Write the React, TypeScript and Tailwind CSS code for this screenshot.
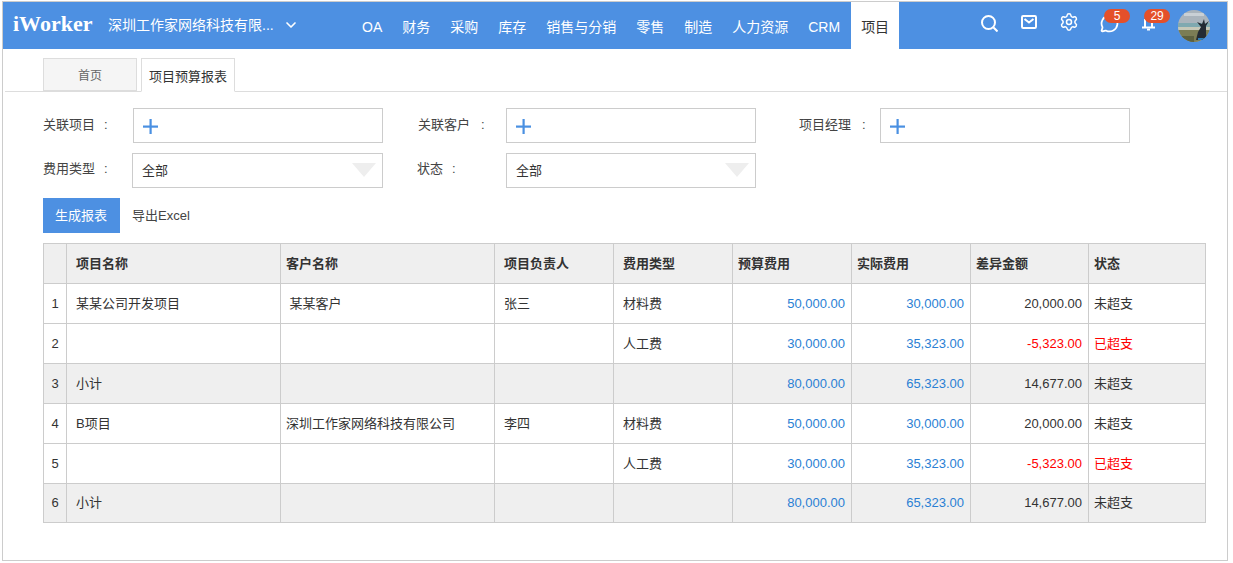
import { ChevronDown, MessageCircle, Settings } from "lucide-react"
import type { ReactNode } from "react"

const navItems = ["OA", "财务", "采购", "库存", "销售与分销", "零售", "制造", "人力资源", "CRM"]

type Row = {
    name: string
    customer: string
    owner: string
    type: string
    budget: string
    actual: string
    diff: string
    status: string
    subtotal?: boolean
    over?: boolean
}

const rows: Row[] = [
    { name: "某某公司开发项目", customer: " 某某客户", owner: "张三", type: "材料费", budget: "50,000.00", actual: "30,000.00", diff: "20,000.00", status: "未超支" },
    { name: "", customer: "", owner: "", type: "人工费", budget: "30,000.00", actual: "35,323.00", diff: "-5,323.00", status: "已超支", over: true },
    { name: "小计", customer: "", owner: "", type: "", budget: "80,000.00", actual: "65,323.00", diff: "14,677.00", status: "未超支", subtotal: true },
    { name: "B项目", customer: "深圳工作家网络科技有限公司", owner: "李四", type: "材料费", budget: "50,000.00", actual: "30,000.00", diff: "20,000.00", status: "未超支" },
    { name: "", customer: "", owner: "", type: "人工费", budget: "30,000.00", actual: "35,323.00", diff: "-5,323.00", status: "已超支", over: true },
    { name: "小计", customer: "", owner: "", type: "", budget: "80,000.00", actual: "65,323.00", diff: "14,677.00", status: "未超支", subtotal: true },
]

const headers = [
    { label: "", cls: "w-[23px]" },
    { label: "项目名称", cls: "w-[214px] px-[9px]" },
    { label: "客户名称", cls: "w-[214px] px-[5px]" },
    { label: "项目负责人", cls: "w-[119px] px-[9px]" },
    { label: "费用类型", cls: "w-[119px] px-[9px]" },
    { label: "预算费用", cls: "w-[119px] px-[5px]" },
    { label: "实际费用", cls: "w-[119px] px-[5px]" },
    { label: "差异金额", cls: "w-[118px] px-[5px]" },
    { label: "状态", cls: "w-[117px] px-[5px]" },
]

function PickerField({ label, labelWidth, colonGap }: { label: string; labelWidth: string; colonGap: string }) {
    return (
        <div className="flex items-center">
            <span className={`${labelWidth} text-[13px] text-[#444] -mt-[1px]`}>
                {label}
                <span className={colonGap}>:</span>
            </span>
            <div className="w-[250px] h-[35px] border border-[#ccc] flex items-center pl-[9px]">
                <svg width="15" height="15" viewBox="0 0 15 15" className="mt-[2px] text-[#4a90e2]" fill="currentColor">
                    <rect x="6.5" width="2.2" height="15" />
                    <rect y="6.5" width="15" height="2.2" />
                </svg>
            </div>
        </div>
    )
}

function SelectField({ label, labelWidth, width }: { label: string; labelWidth: string; width: string }) {
    return (
        <div className="flex items-center">
            <span className={`${labelWidth} text-[13px] text-[#444] -mt-[3px]`}>
                {label}
                <span className="ml-[9px]">:</span>
            </span>
            <div className={`${width} h-[35px] border border-[#ccc] flex items-center justify-between pl-[9px] pr-[6px]`}>
                <span className="text-[13px] text-[#333] mt-[1px]">全部</span>
                <span className="w-0 h-0 border-x-[12px] border-x-transparent border-t-[14px] border-t-[#eeeeee] -mt-[1px]"></span>
            </div>
        </div>
    )
}

function HeaderIcon({ children, badge }: { children: ReactNode; badge?: number }) {
    return (
        <div className="relative w-[40px] flex justify-center pt-[10px]">
            {children}
            {badge !== undefined && (
                <span className="absolute top-[7px] left-[15px] w-[26px] h-[14px] rounded-full bg-[#e4502a] text-white text-[12px] leading-[14px] text-center">
                    {badge}
                </span>
            )}
        </div>
    )
}

function Avatar() {
    return (
        <svg width="32" height="32" viewBox="0 0 32 32" className="rounded-full">
            <rect width="32" height="32" fill="#aab4bc" />
            <rect x="6" y="3" width="20" height="3" fill="#c9d0d5" />
            <rect y="13" width="32" height="4" fill="#7fa9b0" />
            <rect y="17" width="32" height="3" fill="#c5c8b8" />
            <rect y="20" width="32" height="12" fill="#7b7d55" />
            <rect y="26" width="16" height="6" fill="#5c6140" />
            <path d="M19 12 L24 14 L26 9 L27 14 L31 11 L28 16 L28 24 L29 30 L18 30 L20 22 L23 17 Z" fill="#242b33" />
            <rect x="20" y="28" width="7" height="2" fill="#2d7fb8" />
        </svg>
    )
}

export default function App() {
    return (
        <div className="font-['Liberation_Sans','Noto_Sans_CJK_SC',sans-serif] pl-[2px] pt-[1px] w-[1233px] h-[563px] overflow-hidden bg-white">
            <div className="w-[1226px] h-[560px] border border-[#ccc]">
                <header className="h-[47px] bg-[#4d90e2] flex text-white">
                    <span className="ml-[10px] font-['Liberation_Serif',serif] font-bold text-[22px] leading-[44px] w-[95px]">iWorker</span>
                    <span className="text-[14px] leading-[46px] w-[175px]">深圳工作家网络科技有限...</span>
                    <ChevronDown className="mt-[15px]" size={16} strokeWidth={2.5} />
                    <nav className="ml-[53px] flex text-[14px]">
                        {navItems.map((item) => (
                            <span key={item} className="px-[10px] leading-[50px] whitespace-nowrap">{item}</span>
                        ))}
                        <span className="ml-[1px] w-[48px] bg-white text-[#333] text-center leading-[50px]">项目</span>
                    </nav>
                    <div className="ml-[70px] flex">
                        <HeaderIcon>
                            <svg width="17" height="17" viewBox="0 0 17 17" fill="none" stroke="currentColor" strokeWidth="2" className="mt-[3px]">
                                <circle cx="7.5" cy="7.5" r="6.5" />
                                <path d="M12.5 12.5L16.5 16.5" />
                            </svg>
                        </HeaderIcon>
                        <HeaderIcon>
                            <svg width="16" height="14" viewBox="0 0 16 14" fill="none" stroke="currentColor" strokeWidth="2" className="mt-[3px]">
                                <rect x="1" y="1" width="14" height="12" rx="1.2" />
                                <path d="M3.5 4l4.5 3.5L12.5 4" />
                            </svg>
                        </HeaderIcon>
                        <HeaderIcon>
                            <Settings size={20} strokeWidth={1.8} />
                        </HeaderIcon>
                        <HeaderIcon badge={5}>
                            <MessageCircle size={19} strokeWidth={2.2} className="mt-[2px]" />
                        </HeaderIcon>
                        <HeaderIcon badge={29}>
                            <svg width="16" height="18" viewBox="0 0 16 18" fill="none" stroke="currentColor" strokeWidth="2" className="mt-[2px]">
                                <path d="M1 13.5h13M4 13V5M11 13V5" />
                                <path d="M6 15.5h3" />
                            </svg>
                        </HeaderIcon>
                    </div>
                    <div className="ml-[9px] pt-[8px]">
                        <Avatar />
                    </div>
                </header>

                <div className="mt-[9px] ml-[2px] h-[34px] border-b border-[#ddd] flex pl-[38px] gap-[4px]">
                    <div className="w-[94px] h-[33px] border border-[#ddd] bg-[#f5f5f5] text-[12px] text-[#666] text-center leading-[35px]">首页</div>
                    <div className="w-[94px] h-[34px] border border-[#ddd] border-b-white bg-white text-[13px] text-[#333] text-center leading-[35px]">项目预算报表</div>
                </div>

                <div className="pl-[40px] pt-[16px]">
                    <div className="flex">
                        <PickerField label="关联项目" labelWidth="w-[90px]" colonGap="ml-[9px]" />
                        <div className="ml-[35px]"><PickerField label="关联客户" labelWidth="w-[88px]" colonGap="ml-[11px]" /></div>
                        <div className="ml-[43px]"><PickerField label="项目经理" labelWidth="w-[81px]" colonGap="ml-[11px]" /></div>
                    </div>
                    <div className="flex mt-[10px]">
                        <SelectField label="费用类型" labelWidth="w-[89px]" width="w-[251px]" />
                        <div className="ml-[34px]"><SelectField label="状态" labelWidth="w-[89px]" width="w-[250px]" /></div>
                    </div>
                    <div className="flex items-center mt-[10px]">
                        <button className="w-[77px] h-[35px] bg-[#4d90e2] text-white text-[13px] pt-[1px] pr-[1px]">生成报表</button>
                        <span className="ml-[12px] text-[13px] text-[#444] mt-[1px]">导出Excel</span>
                    </div>
                    <table className="mt-[10px] border-collapse table-fixed w-[1163px] text-[13px] text-[#333]">
                        <thead>
                            <tr className="h-[40px] bg-[#efefef]">
                                {headers.map((h, i) => (
                                    <th key={i} className={`${h.cls} border border-[#ccc] text-left font-bold`}>
                                        {h.label}
                                    </th>
                                ))}
                            </tr>
                        </thead>
                        <tbody>
                            {rows.map((r, i) => (
                                <tr key={i} className={`${i === 5 ? "h-[39px]" : "h-[40px]"} ${r.subtotal ? "bg-[#efefef]" : ""}`}>
                                    <td className="border border-[#ccc] text-center">{i + 1}</td>
                                    <td className="border border-[#ccc] px-[9px]">{r.name}</td>
                                    <td className="border border-[#ccc] px-[5px] whitespace-pre">{r.customer}</td>
                                    <td className="border border-[#ccc] px-[9px]">{r.owner}</td>
                                    <td className="border border-[#ccc] px-[9px]">{r.type}</td>
                                    <td className="border border-[#ccc] px-[6px] text-right text-[#2a7fd4]">{r.budget}</td>
                                    <td className="border border-[#ccc] px-[6px] text-right text-[#2a7fd4]">{r.actual}</td>
                                    <td className={`border border-[#ccc] px-[6px] text-right ${r.over ? "text-[#ff0000]" : ""}`}>{r.diff}</td>
                                    <td className={`border border-[#ccc] px-[5px] ${r.over ? "text-[#ff0000]" : ""}`}>{r.status}</td>
                                </tr>
                            ))}
                        </tbody>
                    </table>
                </div>
            </div>
        </div>
    )
}
